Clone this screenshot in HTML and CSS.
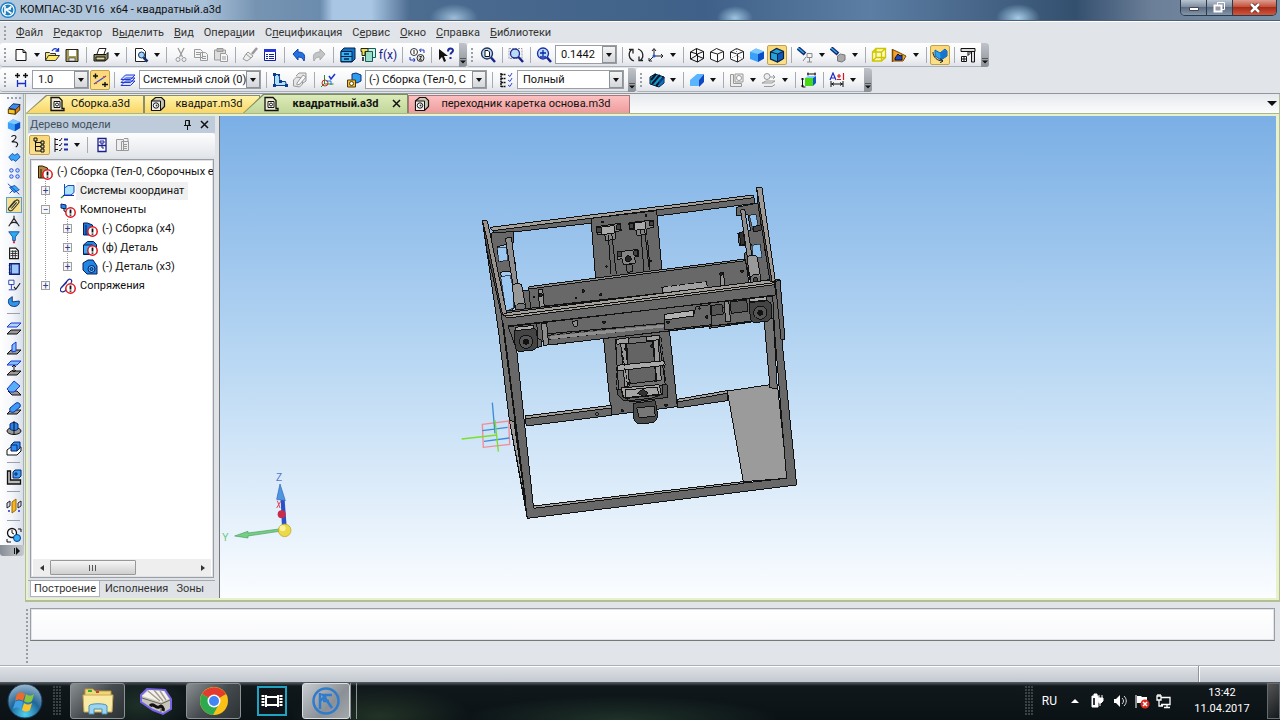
FILE: index.html
```html
<!DOCTYPE html>
<html lang="ru">
  <head>
    <meta charset="UTF-8" />
    <meta name="viewport" content="width=device-width, initial-scale=1.0" />
    <title>КОМПАС-3D V16 x64 - квадратный.a3d</title>
    <link rel="stylesheet" href="styles.css">
  </head>
  <body>
    <!-- icon sprite -->
    <svg class="sprite" aria-hidden="true">
      <defs>
        <symbol id="logo" viewBox="0 0 16 16"><circle cx="8" cy="8" r="8" fill="#1d7fc4"/><circle cx="8" cy="8" r="6" fill="none" stroke="#fff" stroke-width="1.2"/><path d="M5 4v8M11.500 4.500L6.500 8l5 3.500M6 7h5" fill="none" stroke="#fff" stroke-width="1.600"/></symbol>
        <symbol id="new" viewBox="0 0 16 16"><path d="M3 2.500h7l3 3v8H3zM10 2.500v3h3" fill="#fff" stroke="#111"/></symbol>
        <symbol id="open" viewBox="0 0 16 16"><path d="M1.500 13V5.500h4l1 1h5V8" fill="#f5e27a" stroke="#333"/><path d="M1.500 13.500l3-5h11l-4 5z" fill="#ffe76a" stroke="#333"/><path d="M8 4c2-3 4-3 6-1M14.500 1v3h-3" fill="none" stroke="#1632c8" stroke-width="1.300"/></symbol>
        <symbol id="save" viewBox="0 0 16 16"><path d="M2 2.500h12v12H2z" fill="#a99d55" stroke="#222"/><path d="M5 3h7v6H5z" fill="#fff"/><path d="M5 11h6v3H5z" fill="#eee" stroke="#333" stroke-width=".6"/></symbol>
        <symbol id="print" viewBox="0 0 16 16"><path d="M4 7l2-5.500h7L11 7" fill="#fff" stroke="#222"/><path d="M1 7.500h12l2-2v6l-3 2.500H1z" fill="#8d885b" stroke="#111"/><path d="M3 10h9v3H3z" fill="#ded99c" stroke="#111"/></symbol>
        <symbol id="preview" viewBox="0 0 16 16"><path d="M2.500 1.500h7l3 3v10h-10z" fill="#fff" stroke="#222"/><circle cx="8.500" cy="8" r="3" fill="#9fd4f8" stroke="#15306f"/><path d="M10.500 10.500l4 4" stroke="#15306f" stroke-width="2.500"/></symbol>
        <symbol id="cut" viewBox="0 0 16 16"><path d="M5 1l4.500 9M11 1L6.500 10" stroke="#9a9a9a" stroke-width="1.300"/><circle cx="5" cy="12.500" r="2" fill="none" stroke="#9a9a9a"/><circle cx="11" cy="12.500" r="2" fill="none" stroke="#9a9a9a"/></symbol>
        <symbol id="copy" viewBox="0 0 16 16"><path d="M1.500 2.500h6l2 2v6h-8zM7.500 5.500h5l2 2v6h-7zM3 5.500h4M3 7.500h4M9 9.500h4M9 11.500h4" fill="#f4f5f6" stroke="#9a9a9a"/></symbol>
        <symbol id="paste" viewBox="0 0 16 16"><path d="M1.500 3h11v10h-11zM4 1.500h6v3H4z" fill="#ddd" stroke="#999"/><path d="M7.500 6.500h5l2 2v6h-7zM9 10h4M9 12h4" fill="#f7f7f7" stroke="#999"/></symbol>
        <symbol id="brush" viewBox="0 0 16 16"><path d="M15 1l-5 6" stroke="#999" stroke-width="2.500"/><path d="M6 5l5 4-2 2-5-4zM4 7L1 12l4 2 4-3" fill="#eee" stroke="#999"/></symbol>
        <symbol id="props" viewBox="0 0 16 16"><path d="M2.500 2.500h11v11h-11z" fill="#fff" stroke="#13209c"/><path d="M2 2h12v3H2z" fill="#2337d8"/><path d="M4 7.500h2M7 7.500h5M4 9.500h2M7 9.500h5M4 11.500h2M7 11.500h5" stroke="#13209c"/></symbol>
        <symbol id="undo" viewBox="0 0 16 16"><path d="M2 7l5-5v3c5 0 8 2 6 9-1-3-3-4-6-4v3z" fill="#2272e0" stroke="#1044a8"/></symbol>
        <symbol id="redo" viewBox="0 0 16 16"><path d="M14 7L9 2v3C4 5 1 7 3 14c1-3 3-4 6-4v3z" fill="#c2c4c6" stroke="#aaa"/></symbol>
        <symbol id="cabinet" viewBox="0 0 16 16"><path d="M1 4l3-3h11v11l-3 3H1z" fill="#1173c6" stroke="#06224c"/><path d="M1 4.500h11v10H1zM1 9.500h11" fill="#37b5f2" stroke="#06224c"/><path d="M4 7h5M4 12h5" stroke="#002454" stroke-width="1.500"/></symbol>
        <symbol id="library" viewBox="0 0 16 16"><path d="M7.500 1.500h8v9h-8z" fill="#d4f0e6" stroke="#115d57"/><path d="M5.500 4.500h7v10h-7z" fill="#9adcc8" stroke="#115d57"/><path d="M1 1.500h7v3H5v4H2v-4H1z" fill="#ece34a" stroke="#222"/><path d="M3 10v4" stroke="#111" stroke-width="1.500"/></symbol>
        <symbol id="cycle12" viewBox="0 0 16 16"><circle cx="5" cy="5" r="3.500" fill="#fff" stroke="#333"/><circle cx="11.500" cy="11" r="3.500" fill="#ddd" stroke="#333"/><path d="M5 3v4M10.500 9.500h2L10.500 13h2.500" stroke="#222" fill="none"/><path d="M15 6V3h-4M1 10v3h5M12 1.500L10.500 3 12 5M4.500 11L6 13l-1.500 2" fill="none" stroke="#1a32c8"/></symbol>
        <symbol id="whats" viewBox="0 0 16 16"><path d="M1 2v11l3-3 2 5 2-1-2-5h4z" fill="#111"/><path d="M10 4.500c0-4 5-3.500 5-1 0 2-2.500 2-2.500 4M12.500 10v2" fill="none" stroke="#1a2a9c" stroke-width="2"/></symbol>
        <symbol id="zoomfit" viewBox="0 0 16 16"><circle cx="7" cy="6.500" r="5.500" fill="#b9dcf6" stroke="#222b5e" stroke-width="1.300"/><path d="M11 10.500l4 4.500" stroke="#17248c" stroke-width="2.500"/><path d="M5 3.500h3l1.500 1.500v4.500H5z" fill="#fff" stroke="#111"/></symbol>
        <symbol id="zoomwin" viewBox="0 0 16 16"><path d="M1 1.500h13v10H1z" fill="none" stroke="#99a" stroke-dasharray="2 1"/><circle cx="7" cy="6.500" r="4.500" fill="#b9dcf6" stroke="#222b8e" stroke-width="1.300"/><path d="M10.500 10l4.500 5" stroke="#17248c" stroke-width="2.500"/></symbol>
        <symbol id="zoomin" viewBox="0 0 16 16"><circle cx="7" cy="6.500" r="5.500" fill="#b9dcf6" stroke="#1d2caa" stroke-width="1.300"/><path d="M11 10.500l4 4.500" stroke="#17248c" stroke-width="2.500"/><path d="M4 6h6M7 3v6M4 10h6" stroke="#1023a8" stroke-width="1.300"/></symbol>
        <symbol id="rotate" viewBox="0 0 16 16"><path d="M6 14C0 12 0 5 4 2.500M1 2.500h4v4M10 2c6 2 6 9 2 11.500M15 13.500h-4v-4" fill="none" stroke="#222" stroke-width="1.300"/></symbol>
        <symbol id="axes" viewBox="0 0 16 16"><path d="M6 10V2M4 4l2-2.500L8 4M6 9h9M13 7l2 2-2 2M6 9l-5 5M1 11v3h3" fill="none" stroke="#222"/><circle cx="6" cy="9" r="1.500" fill="#25d"/></symbol>
        <symbol id="wire" viewBox="0 0 16 16"><path d="M1.500 5v7l7 3V7zM1.500 5l6-3.500 7 3-6 2.500M14.500 4.500v7L8.500 15M7.500 1.500v7l7 3M7.500 8.500l-6 3.500" fill="none" stroke="#111"/></symbol>
        <symbol id="hidden" viewBox="0 0 16 16"><path d="M1.500 5v7l7 3V7zM1.500 5l6-3.500 7 3-6 2.500M14.500 4.500v7L8.500 15" fill="#fff" stroke="#222"/></symbol>
        <symbol id="thin" viewBox="0 0 16 16"><path d="M1.500 5v7l7 3V7zM1.500 5l6-3.500 7 3-6 2.500M14.500 4.500v7L8.500 15" fill="#fff" stroke="#222"/><path d="M7.500 2v6.500l6 3M7.500 8.500l-6 3" fill="none" stroke="#888" stroke-dasharray="1 1"/></symbol>
        <symbol id="solid" viewBox="0 0 16 16"><path d="M1 5l6-3.500 8 3v7L9 15l-8-3z" fill="#3ba0fa"/><path d="M9 7l6-2.500v7L9 15z" fill="#0b4dc4"/><path d="M1 5l6-3.500 8 3L9 7z" fill="#7cc8ff"/></symbol>
        <symbol id="solidedge" viewBox="0 0 16 16"><path d="M1.500 5l6-3.500 7 3v7L8.500 15l-7-3z" fill="#23a3d8" stroke="#0a1d44" stroke-width="1.200"/><path d="M8.500 7l6-2.500v7L8.500 15z" fill="#0d5ab4" stroke="#0a1d44"/><path d="M1.500 5l7 2" stroke="#0a1d44"/></symbol>
        <symbol id="lamp" viewBox="0 0 16 16"><path d="M1 1l7 6" stroke="#14256c" stroke-width="4"/><path d="M1 1l6 5" stroke="#2fb0f4" stroke-width="1.500"/><path d="M10 6.500h5v4h-5zM12.500 10.500V15M10 15h5M6 14l3-4" fill="none" stroke="#888"/></symbol>
        <symbol id="lampbox" viewBox="0 0 16 16"><path d="M1 1l7 6" stroke="#14256c" stroke-width="4"/><path d="M1 1l6 5" stroke="#2fb0f4" stroke-width="1.500"/><path d="M7.500 9l3-2 4.500 1v5l-3 2-4.500-1z" fill="#aaa" stroke="#777"/></symbol>
        <symbol id="ybox" viewBox="0 0 16 16"><path d="M1.500 5h9v9h-9zM5 1.500h9.500v9H5zM1.500 5L5 1.500M10.500 5l4-3.500M10.500 14l4-3.500M1.500 14L5 10.500" fill="#ffff9a" fill-opacity=".6" stroke="#cfc400" stroke-width="1.300"/></symbol>
        <symbol id="section" viewBox="0 0 16 16"><path d="M1.500 14V2.500L7 5l8 4-3 5z" fill="#f2a32c" stroke="#7a4a05"/><path d="M4 11l3-4 2 2 2-1v5H4z" fill="#1d49c8" stroke="#112"/><path d="M1.500 2v13" stroke="#7a4a05" stroke-width="1.500"/></symbol>
        <symbol id="spin" viewBox="0 0 16 16"><path d="M3 3l5 3 5-4 2 2v5l-6 4-6-4z" fill="#24a5ee" stroke="#1260b8"/><path d="M8 6l5-3 2 1v5l-6 4z" fill="#1673d0"/><path d="M1 5c0 5 4 9 10 9M8 11.500l3 2.500-3 2" fill="none" stroke="#222"/></symbol>
        <symbol id="caliper" viewBox="0 0 16 16"><path d="M1 1.500h14v3H1zM11.500 4.500V15h3V4.500M8 4.500v4l2-2v-2" fill="#ddd" stroke="#111"/><path d="M1.500 9.500h5v5h-5zM4 9.500v5M1.500 12h5" fill="#fff" stroke="#111"/></symbol>
        <symbol id="step" viewBox="0 0 16 16"><path d="M2 3.500h5M4.500 1v5M10 3.500h5M12.500 1v5" stroke="#111" stroke-width="1.400"/><path d="M4.500 8v7M12.500 8v7M5 11.500h7" stroke="#1732c8" stroke-width="1.300"/></symbol>
        <symbol id="snap" viewBox="0 0 16 16"><path d="M1 4h5M3.500 1.500v5M10 12.500h6M13 10v5" stroke="#111" stroke-width="1.400"/><path d="M2 12l12-8" stroke="#334bd8" stroke-width="1.200"/><path d="M3 10h2v2H3zM11 4h2v2h-2z" fill="#c54"/></symbol>
        <symbol id="layers" viewBox="0 0 16 16"><path d="M1 13.500L5.500 9H15l-4.500 4.500zM1 10.500L5.500 6H15l-4.500 4.500zM1 7.500L5.500 3H15l-4.500 4.500z" fill="#cfe4ff" stroke="#2937d4"/></symbol>
        <symbol id="sketch" viewBox="0 0 16 16"><path d="M2.500 2.500v11h12l-1-4H8l-1-7z" fill="#aee0f8" stroke="#0a3b8e"/><path d="M1 1h3v3H1zM1 12h3v3H1zM13 12h3v3h-3zM6 2h2v2H6zM7 8h3v3H7z" fill="#0a3b8e"/></symbol>
        <symbol id="sketchoff" viewBox="0 0 16 16"><path d="M1.500 8l3-3 6 1v6l-3 3-6-1zM4 4l3-3h7v8l-3 2" fill="#e6e6e6" stroke="#999"/><path d="M5 11l6-8 3 2-6 7-3 1z" fill="#f8f8f8" stroke="#999"/></symbol>
        <symbol id="rebuild" viewBox="0 0 16 16"><path d="M4.500 3v9h9M5 11l-4 4" stroke="#1b8f2a" fill="none"/><circle cx="5" cy="11" r="3" fill="none" stroke="#d22"/><path d="M6 9h5v4" fill="none" stroke="#27d"/><path d="M9 4l2 3 4-5" fill="none" stroke="#1732c8" stroke-width="1.500"/></symbol>
        <symbol id="assembly" viewBox="0 0 16 16"><path d="M6 2l4-1 5 2v6l-4 2-5-2z" fill="#2f9cf0" stroke="#0b2e7c"/><path d="M1.500 8h8v7h-8z" fill="#f4c23b" stroke="#553a00"/><circle cx="5.500" cy="11.500" r="2" fill="#fff" stroke="#553a00"/></symbol>
        <symbol id="display" viewBox="0 0 16 16"><path d="M3 1v14M3 2.500h5M3 6.500h5M3 10.500h5M3 14.500h5" stroke="#111" stroke-width="1.500" stroke-dasharray="2 .5"/><path d="M10 3l2 1.500L14 1M10 8l2 1.500L14 6M10 13l2 1.500 2-3.500" fill="none" stroke="#3345d4"/></symbol>
        <symbol id="hatch" viewBox="0 0 16 16"><path d="M1 5l5-3 9 3v6l-5 4-9-3z" fill="#159ac8" stroke="#0a1a35"/><path d="M2 8l5-6M3 12l8-9M7 14l8-9" stroke="#06132c" stroke-width="2"/><path d="M10 8l5-3v6l-5 4z" fill="#0d5ab4" fill-opacity=".6"/></symbol>
        <symbol id="wedge" viewBox="0 0 16 16"><path d="M1 8l7-6h7l-5 6v6H1z" fill="#5ab4ff"/><path d="M10 8l5-6v8l-5 5z" fill="#1049c0"/></symbol>
        <symbol id="ghost" viewBox="0 0 16 16"><path d="M1.500 2.500h3v9h8v3h-11zM6 2h8v8H6z" fill="#eee" stroke="#999"/><circle cx="10" cy="6" r="2.500" fill="#fff" stroke="#999"/></symbol>
        <symbol id="ghostplane" viewBox="0 0 16 16"><path d="M1 11l4-2h9l-3 2zM3 14.500h8l3-2" fill="#eee" stroke="#999"/><circle cx="6" cy="4.500" r="3" fill="#eee" stroke="#999"/><path d="M9 5h5M12 3l2 2-2 2" fill="none" stroke="#999"/></symbol>
        <symbol id="dims" viewBox="0 0 16 16"><path d="M4 6h8v8H4z" fill="#46d816"/><path d="M4 6l3-2h8l-3 2z" fill="#7cd2ff"/><path d="M12 6l3-2v7l-3 3z" fill="#1057d0"/><path d="M1.500 6v9h3M6 2h9M7 .5v3M14 .5v3M0 7h3M0 14h3" fill="none" stroke="#111"/></symbol>
        <symbol id="tolerance" viewBox="0 0 16 16"><path d="M1 8l3-7 3 7M2 6h4" fill="none" stroke="#1a2cc4" stroke-width="1.200"/><path d="M8 4h4M10 2v4M8 7.500h4M14.500 1v7" stroke="#d4181c" stroke-width="1.200"/><path d="M2 9v6M14 9v6M2 12h12M5 10.500L3 12l2 1.500M11 10.500l2 1.500-2 1.500" fill="none" stroke="#111"/></symbol>
        <symbol id="asmtab" viewBox="0 0 16 16"><path d="M2 1.500h8l3 3v8h2v2H2z" fill="#ece9d0" stroke="#111" stroke-width="1.300"/><path d="M5 5.500h6v6H5z" fill="#fff" stroke="#111"/><circle cx="8" cy="8.500" r="1.500" fill="none" stroke="#111"/></symbol>
        <symbol id="parttab" viewBox="0 0 16 16"><path d="M1.500 5l4-3.500h6l3 3v6l-4 4h-9z" fill="#c9c7b0" stroke="#111" stroke-width="1.200"/><path d="M1.500 5h9v9.500h-9z" fill="#eee" stroke="#111"/><circle cx="6" cy="9.500" r="2.700" fill="#fff" stroke="#111"/><circle cx="6.500" cy="9.500" r="1" fill="#333"/></symbol>
        <symbol id="edit" viewBox="0 0 16 16"><path d="M2 7l5-5 8 1-4 6z" fill="#3a8cf0" stroke="#0a1d5c"/><path d="M1.500 8l8 1v5l-8-1z" fill="#f6c81c" stroke="#3c2200"/><path d="M9.500 9l5-5v5l-5 5z" fill="#e08010" stroke="#3c2200"/></symbol>
        <symbol id="curve" viewBox="0 0 16 16"><path d="M5 3c4-3 7 0 4 3S4 9 8 9s6 3 2 6" fill="none" stroke="#111" stroke-width="1.200"/></symbol>
        <symbol id="surface" viewBox="0 0 16 16"><path d="M2 8l4-4 3 2 3-2 3 4-5 5-3-2-2 1z" fill="#3aa2f4" stroke="#0e4cae"/></symbol>
        <symbol id="array" viewBox="0 0 16 16"><g fill="#bfe0ff" stroke="#1b45d4"><circle cx="5" cy="5" r="2"/><circle cx="12" cy="5" r="2"/><circle cx="5" cy="12" r="2"/><circle cx="12" cy="12" r="2"/></g></symbol>
        <symbol id="aux" viewBox="0 0 16 16"><path d="M3 6l6-2 5 5-6 3z" fill="#37a8f2" stroke="#0f49b0"/><path d="M1 2l13 12M3 13l4-4" stroke="#1338a8"/></symbol>
        <symbol id="clip" viewBox="0 0 16 16"><path d="M3 11l7-8c2-2 5 0 3 3l-7 8c-3 2-6-1-3-4l6-7M5 12l6-7" fill="none" stroke="#333" stroke-width="1.200"/></symbol>
        <symbol id="compass" viewBox="0 0 16 16"><path d="M8 2v3M8 5L2 14M8 5l6 9M4 11c2-2 6-2 8 0" fill="none" stroke="#222" stroke-width="1.300"/></symbol>
        <symbol id="filter" viewBox="0 0 16 16"><path d="M2 2h12L9.500 8v4h-3V8z" fill="#2fa8f4" stroke="#0d4ea0"/><circle cx="8" cy="14" r="1.300" fill="#e22"/></symbol>
        <symbol id="sheet" viewBox="0 0 16 16"><path d="M3 2.500h7l3 3v9H3z" fill="#fff" stroke="#111" stroke-width="1.300"/><path d="M4 6h8M4 8.500h8M4 11h8M6.500 5v9M9.500 5v9" stroke="#222"/></symbol>
        <symbol id="report" viewBox="0 0 16 16"><path d="M3 2h11v12H3z" fill="#9fc6f8" stroke="#0a1f7c" stroke-width="1.500"/><path d="M5 2v12M2 4h2M2 8h2M2 12h2" stroke="#0a1f7c"/></symbol>
        <symbol id="check" viewBox="0 0 16 16"><path d="M2 2.500h6v5H2zM5 7.500V13M2 13.500h7" fill="#fff" stroke="#1732a8"/><path d="M8 10l2 3 5-7" fill="none" stroke="#111" stroke-width="1.200"/></symbol>
        <symbol id="sheetmetal" viewBox="0 0 16 16"><path d="M2 6l4-3v6l8-1c1 5-4 7-8 6s-5-4-4-8z" fill="#2b96ea" stroke="#0a2468"/></symbol>
        <symbol id="pl1" viewBox="0 0 16 16"><path d="M1 7l4-4h10l-4 4z" fill="#a9d7ff" stroke="#1c35d0"/><path d="M1 14l4-4h10l-4 4z" fill="#999" stroke="#111"/></symbol>
        <symbol id="pl2" viewBox="0 0 16 16"><path d="M1 14l4-4h10l-4 4z" fill="#999" stroke="#111"/><path d="M6 12V5l4-3v9z" fill="#7cc0ff" stroke="#1c35d0"/></symbol>
        <symbol id="pl3" viewBox="0 0 16 16"><path d="M1 5l4-4h10l-4 4z" fill="#7cc0ff" stroke="#1c35d0"/><path d="M1 15l4-4h10l-4 4z" fill="#999" stroke="#111"/><path d="M8 5v7M6 7l2-2 2 2M6 10l2 2 2-2" fill="none" stroke="#111"/></symbol>
        <symbol id="pl4" viewBox="0 0 16 16"><path d="M2 11h9l4 4H6z" fill="#999" stroke="#111"/><path d="M1 9l7-8 6 5-6 6H4z" fill="#59aef8" stroke="#1c35d0"/></symbol>
        <symbol id="pl5" viewBox="0 0 16 16"><path d="M1 14l4-4h10l-4 4z" fill="#999" stroke="#111"/><path d="M4 8l6-5c3-1 5 1 4 4l-6 5c-3 1-5-1-4-4z" fill="#3c9cf4" stroke="#1230a4"/></symbol>
        <symbol id="pl6" viewBox="0 0 16 16"><ellipse cx="8" cy="11" rx="7" ry="3.500" fill="#999" stroke="#111"/><path d="M4 4v5c2 2 6 2 8 0V4c-2-2-6-2-8 0z" fill="#2b83ea" stroke="#0a2468"/><path d="M8 1v14" stroke="#111"/></symbol>
        <symbol id="pl7" viewBox="0 0 16 16"><path d="M1 10l4-3h10v4l-4 4H1z" fill="#fff" stroke="#111"/><path d="M5 5l3-3h6v6l-3 3H5z" fill="#2f8cf0" stroke="#0a2468"/><path d="M5 5h6v6" fill="none" stroke="#0a2468"/></symbol>
        <symbol id="corner" viewBox="0 0 16 16"><path d="M1.500 2h3v9h10v4h-13z" fill="#bbb" stroke="#111" stroke-width="1.300"/><path d="M7 3l2-2h6v6l-2 2H7z" fill="#3c9cf4" stroke="#0a2468"/><path d="M10 3v4M8 5h4" stroke="#0a2468"/></symbol>
        <symbol id="mirror" viewBox="0 0 16 16"><path d="M6 4l4-3v11l-4 3z" fill="#f4b628" stroke="#a06a00"/><path d="M1 5l3-2v5l-3 2zM12 5l3-2v5l-3 2z" fill="#ddd" stroke="#223"/><circle cx="3" cy="13" r="1" fill="#1c35d0"/><circle cx="13" cy="13" r="1" fill="#1c35d0"/></symbol>
        <symbol id="gears" viewBox="0 0 16 16"><circle cx="6" cy="6" r="4.500" fill="#fff" stroke="#111" stroke-width="1.300"/><path d="M6 3v3l2 1" stroke="#111" fill="none"/><circle cx="11" cy="11" r="3.500" fill="#2fb0f4" stroke="#0a3b8e"/><path d="M12 2h3v3M1 12v3h4" fill="none" stroke="#111"/></symbol>
        <symbol id="tree" viewBox="0 0 16 16"><path d="M3.500 1v13h6M3.500 5.500h6M3.500 9.500h6" fill="none" stroke="#111"/><path d="M2 1h3v3H2zM9 4h3v3H9zM9 8h3v3H9zM9 12h3v3H9z" fill="#e8dc90" stroke="#111"/></symbol>
        <symbol id="list" viewBox="0 0 16 16"><path d="M2 1v14M2 2.500h3M2 7.500h3M2 12.500h3" stroke="#111"/><path d="M6 3l1 1 2-3M6 8l1 1 2-3M6 13l1 1 2-3" fill="none" stroke="#223"/><path d="M11 2.500h4M11 7.500h4M11 12.500h4" stroke="#1a2caa" stroke-width="2"/></symbol>
        <symbol id="panel" viewBox="0 0 16 16"><path d="M4 1.500h8v13H4zM4 8.500h8" fill="#fff" stroke="#1a1f8c" stroke-width="1.300"/><path d="M6 4h4v2H6zM8 6v5h2" fill="none" stroke="#1a1f8c"/></symbol>
        <symbol id="reloff" viewBox="0 0 16 16"><path d="M1.500 2.500h7v11h-7zM6.500 4.500h7v9h-7zM8 7.500h4M8 9.500h4M8 11.500h4M9 1.500h4v3" fill="#eee" stroke="#999"/></symbol>
        <symbol id="bang" viewBox="0 0 16 16"><circle cx="10.500" cy="10.500" r="4.700" fill="#fff" stroke="#e0141c" stroke-width="1.500"/><path d="M10.500 7.500v4M10.500 12.500v1.300" stroke="#111" stroke-width="1.800"/></symbol>
        <symbol id="t-root" viewBox="0 0 16 16"><path d="M1.500 2h4l5 2v4h3v6h-12z" fill="#b38a4a" stroke="#2c1c00"/><path d="M4 5v9" stroke="#2c1c00"/><use href="#bang"/></symbol>
        <symbol id="t-cs" viewBox="0 0 16 16"><path d="M4.500 5L8 2.500h6v7L11 12H4.500z" fill="#a8e4fa" stroke="#1a49c0"/><path d="M4.500 1v11" stroke="#1a49c0"/><path d="M4.500 12L1 15" stroke="#1b9a28" stroke-width="1.300"/><path d="M3 12.500h11" stroke="#1a2cc8"/></symbol>
        <symbol id="t-comp" viewBox="0 0 16 16"><path d="M1 2l5 1v4l-5-1z" fill="#2a8cf0" stroke="#0a2468"/><path d="M4 6v3l3 1" stroke="#111" fill="none"/><use href="#bang"/></symbol>
        <symbol id="t-asm" viewBox="0 0 16 16"><path d="M1.500 2h4l5 2v4h3v6h-12z" fill="#1a78d8" stroke="#081c5c"/><path d="M4 4v10" stroke="#081c5c"/><use href="#bang"/></symbol>
        <symbol id="t-part" viewBox="0 0 16 16"><path d="M1.500 5l4-3.500h6l3 3v6l-4 4h-9z" fill="#1e86e4" stroke="#081c5c"/><path d="M1.500 5h9v9h-9z" fill="#3faaf4" stroke="#081c5c"/></symbol>
        <symbol id="t-partbad" viewBox="0 0 16 16"><use href="#t-part"/><use href="#bang"/></symbol>
        <symbol id="t-partok" viewBox="0 0 16 16"><path d="M1 4l5-3h5l4 6v8H5L1 11z" fill="#1e86e4" stroke="#081c5c"/><circle cx="9.500" cy="10" r="3.500" fill="#5cc0ff" stroke="#081c5c"/><circle cx="9.500" cy="10" r="1.500" fill="#1e86e4" stroke="#081c5c"/></symbol>
        <symbol id="t-mate" viewBox="0 0 16 16"><path d="M1 10l7-8c2-2 5 0 3 3l-6 8c-3 2-6 0-4-3l6-6" fill="none" stroke="#1b2a9c" stroke-width="1.200"/><use href="#bang"/></symbol>
      </defs>
    </svg>

    <header class="titlebar">
      <svg class="titlebar__logo"><use href="#logo"/></svg>
      <h1 class="titlebar__text">КОМПАС-3D V16 &nbsp;x64 - квадратный.a3d</h1>
      <div class="titlebar__btns">
        <button class="winbtn" aria-label="Свернуть"><svg width="12" height="8"><path d="M1.500 3.500h9v3h-9z" fill="#fff" stroke="#445"/></svg></button>
        <button class="winbtn" aria-label="Восстановить"><svg width="13" height="11"><path d="M4.500 .5h7v7h-7z" fill="none" stroke="#fff"/><path d="M1.500 3.500h7v6h-7z" fill="#99a" stroke="#fff" stroke-width="2"/></svg></button>
        <button class="winbtn winbtn--close" aria-label="Закрыть"><svg width="12" height="10"><path d="M2 1l8 8M10 1L2 9" stroke="#5c2020" stroke-width="4"/><path d="M2 1l8 8M10 1L2 9" stroke="#fff" stroke-width="2.500"/></svg></button>
      </div>
    </header>

    <nav class="menu">
      <span class="grip"></span>
      <button class="menu__item"><u>Ф</u>айл</button>
      <button class="menu__item"><u>Р</u>едактор</button>
      <button class="menu__item">В<u>ы</u>делить</button>
      <button class="menu__item"><u>В</u>ид</button>
      <button class="menu__item">Опера<u>ц</u>ии</button>
      <button class="menu__item">С<u>п</u>ецификация</button>
      <button class="menu__item">С<u>е</u>рвис</button>
      <button class="menu__item"><u>О</u>кно</button>
      <button class="menu__item"><u>С</u>правка</button>
      <button class="menu__item"><u>Б</u>иблиотеки</button>
    </nav>

    <div class="toolbars">
      <div class="toolbar">
        <span class="grip"></span>
        <button class="tool" aria-label="Создать"><svg class="icon"><use href="#new"/></svg></button>
        <button class="drop" aria-label="Варианты создания"></button>
        <button class="tool" aria-label="Открыть"><svg class="icon"><use href="#open"/></svg></button>
        <button class="tool" aria-label="Сохранить"><svg class="icon"><use href="#save"/></svg></button>
        <span class="sep"></span>
        <button class="tool" aria-label="Печать"><svg class="icon"><use href="#print"/></svg></button>
        <button class="drop" aria-label="Варианты печати"></button>
        <span class="sep"></span>
        <button class="tool" aria-label="Просмотр"><svg class="icon"><use href="#preview"/></svg></button>
        <button class="drop" aria-label="Варианты просмотра"></button>
        <span class="sep"></span>
        <button class="tool" aria-label="Вырезать"><svg class="icon"><use href="#cut"/></svg></button>
        <button class="tool" aria-label="Копировать"><svg class="icon"><use href="#copy"/></svg></button>
        <button class="tool" aria-label="Вставить"><svg class="icon"><use href="#paste"/></svg></button>
        <span class="sep"></span>
        <button class="tool" aria-label="Копировать свойства"><svg class="icon"><use href="#brush"/></svg></button>
        <button class="tool" aria-label="Свойства"><svg class="icon"><use href="#props"/></svg></button>
        <span class="sep"></span>
        <button class="tool" aria-label="Отменить"><svg class="icon"><use href="#undo"/></svg></button>
        <button class="tool" aria-label="Повторить"><svg class="icon"><use href="#redo"/></svg></button>
        <span class="sep"></span>
        <button class="tool" aria-label="Менеджер библиотек"><svg class="icon"><use href="#cabinet"/></svg></button>
        <button class="tool" aria-label="Менеджер документа"><svg class="icon"><use href="#library"/></svg></button>
        <button class="tool tool--fx">f(x)</button>
        <span class="sep"></span>
        <button class="tool" aria-label="Перенумеровать"><svg class="icon"><use href="#cycle12"/></svg></button>
        <span class="sep"></span>
        <button class="tool" aria-label="Что это такое?"><svg class="icon"><use href="#whats"/></svg></button>
        <button class="cap" aria-label="Параметры панели"></button>
      </div>
      <div class="toolbar toolbar--view">
        <span class="grip"></span>
        <button class="tool" aria-label="Показать все"><svg class="icon"><use href="#zoomfit"/></svg></button>
        <span class="sep"></span>
        <button class="tool" aria-label="Увеличить рамкой"><svg class="icon"><use href="#zoomwin"/></svg></button>
        <span class="sep"></span>
        <button class="tool" aria-label="Масштаб"><svg class="icon"><use href="#zoomin"/></svg></button>
        <label class="combo combo--zoom"><select aria-label="Текущий масштаб"><option>0.1442</option></select><span class="combo__btn"></span></label>
        <span class="sep"></span>
        <button class="tool" aria-label="Повернуть"><svg class="icon"><use href="#rotate"/></svg></button>
        <button class="tool" aria-label="Ориентация"><svg class="icon"><use href="#axes"/></svg></button>
        <button class="drop" aria-label="Список ориентаций"></button>
        <span class="sep"></span>
        <button class="tool" aria-label="Каркас"><svg class="icon"><use href="#wire"/></svg></button>
        <button class="tool" aria-label="Без невидимых линий"><svg class="icon"><use href="#hidden"/></svg></button>
        <button class="tool" aria-label="Невидимые линии тонкие"><svg class="icon"><use href="#thin"/></svg></button>
        <button class="tool" aria-label="Полутоновое"><svg class="icon"><use href="#solid"/></svg></button>
        <button class="tool tool--on" aria-label="Полутоновое с каркасом"><svg class="icon"><use href="#solidedge"/></svg></button>
        <span class="sep"></span>
        <button class="tool" aria-label="Скрыть объекты"><svg class="icon"><use href="#lamp"/></svg></button>
        <button class="drop" aria-label="Список скрытых"></button>
        <button class="tool" aria-label="Скрыть компоненты"><svg class="icon"><use href="#lampbox"/></svg></button>
        <button class="drop" aria-label="Список компонентов"></button>
        <span class="sep"></span>
        <button class="tool" aria-label="Габарит"><svg class="icon"><use href="#ybox"/></svg></button>
        <button class="tool" aria-label="Сечение"><svg class="icon"><use href="#section"/></svg></button>
        <button class="drop" aria-label="Список сечений"></button>
        <span class="sep"></span>
        <button class="tool tool--on" aria-label="Вращение"><svg class="icon"><use href="#spin"/></svg></button>
        <span class="sep"></span>
        <button class="tool" aria-label="Измерить"><svg class="icon"><use href="#caliper"/></svg></button>
        <button class="cap" aria-label="Параметры панели"></button>
      </div>
    </div>

    <div class="toolbars">
      <div class="toolbar toolbar--state">
        <span class="grip"></span>
        <button class="tool" aria-label="Шаг курсора"><svg class="icon"><use href="#step"/></svg></button>
        <label class="combo combo--step"><select aria-label="Текущий шаг"><option>1.0</option></select><span class="combo__btn"></span></label>
        <button class="tool tool--on" aria-label="Привязки"><svg class="icon"><use href="#snap"/></svg></button>
        <span class="sep"></span>
        <button class="tool" aria-label="Слои"><svg class="icon"><use href="#layers"/></svg></button>
        <label class="combo combo--wide"><select aria-label="Текущий слой"><option>Системный слой (0)</option></select><span class="combo__btn"></span></label>
        <span class="sep"></span>
        <button class="tool" aria-label="Эскиз"><svg class="icon"><use href="#sketch"/></svg></button>
        <button class="tool" aria-label="Редактировать эскиз"><svg class="icon"><use href="#sketchoff"/></svg></button>
        <span class="sep"></span>
        <button class="tool" aria-label="Перестроить"><svg class="icon"><use href="#rebuild"/></svg></button>
        <span class="sep sep--blank"></span>
        <button class="tool" aria-label="Исполнение"><svg class="icon"><use href="#assembly"/></svg></button>
        <label class="combo combo--wide"><select aria-label="Текущее исполнение"><option>(-) Сборка (Тел-0, С</option></select><span class="combo__btn"></span></label>
        <span class="sep"></span>
        <button class="tool" aria-label="Тип загрузки"><svg class="icon"><use href="#display"/></svg></button>
        <label class="combo combo--load"><select aria-label="Загрузка"><option>Полный</option></select><span class="combo__btn"></span></label>
        <button class="cap" aria-label="Параметры панели"></button>
      </div>
      <div class="toolbar toolbar--model">
        <span class="grip"></span>
        <button class="tool" aria-label="Штриховка"><svg class="icon"><use href="#hatch"/></svg></button>
        <button class="drop" aria-label="Ещё"></button>
        <span class="sep"></span>
        <button class="tool" aria-label="Скос"><svg class="icon"><use href="#wedge"/></svg></button>
        <button class="drop" aria-label="Ещё"></button>
        <span class="sep"></span>
        <button class="tool" aria-label="Компонент"><svg class="icon"><use href="#ghost"/></svg></button>
        <button class="drop" aria-label="Ещё"></button>
        <button class="tool" aria-label="Плоскость"><svg class="icon"><use href="#ghostplane"/></svg></button>
        <button class="drop" aria-label="Ещё"></button>
        <span class="sep"></span>
        <button class="tool" aria-label="Размеры"><svg class="icon"><use href="#dims"/></svg></button>
        <span class="sep"></span>
        <button class="tool" aria-label="Допуски"><svg class="icon"><use href="#tolerance"/></svg></button>
        <button class="drop" aria-label="Ещё"></button>
        <button class="cap" aria-label="Параметры панели"></button>
      </div>
    </div>

    <main class="work">
      <aside class="sidebar">
        <div class="sidebar__tools">
          <span class="grip grip--row"></span>
          <button class="side" aria-label="Редактирование"><svg class="icon"><use href="#edit"/></svg></button>
          <button class="side" aria-label="Элементы"><svg class="icon"><use href="#solid"/></svg></button>
          <button class="side" aria-label="Кривые"><svg class="icon"><use href="#curve"/></svg></button>
          <button class="side" aria-label="Поверхности"><svg class="icon"><use href="#surface"/></svg></button>
          <button class="side" aria-label="Массивы"><svg class="icon"><use href="#array"/></svg></button>
          <button class="side" aria-label="Геометрия"><svg class="icon"><use href="#aux"/></svg></button>
          <button class="side side--on" aria-label="Сопряжения"><svg class="icon"><use href="#clip"/></svg></button>
          <button class="side" aria-label="Измерения"><svg class="icon"><use href="#compass"/></svg></button>
          <button class="side" aria-label="Фильтры"><svg class="icon"><use href="#filter"/></svg></button>
          <button class="side" aria-label="Спецификация"><svg class="icon"><use href="#sheet"/></svg></button>
          <button class="side" aria-label="Отчёты"><svg class="icon"><use href="#report"/></svg></button>
          <button class="side" aria-label="Обозначения"><svg class="icon"><use href="#check"/></svg></button>
          <button class="side" aria-label="Листовое тело"><svg class="icon"><use href="#sheetmetal"/></svg></button>
          <span class="hsep"></span>
          <button class="side side--tall" aria-label="Параллельность"><svg class="icon"><use href="#pl1"/></svg></button>
          <button class="side side--tall" aria-label="Перпендикулярность"><svg class="icon"><use href="#pl2"/></svg></button>
          <button class="side side--tall" aria-label="На расстоянии"><svg class="icon"><use href="#pl3"/></svg></button>
          <button class="side side--tall" aria-label="Под углом"><svg class="icon"><use href="#pl4"/></svg></button>
          <button class="side side--tall" aria-label="Касание"><svg class="icon"><use href="#pl5"/></svg></button>
          <button class="side side--tall" aria-label="Соосность"><svg class="icon"><use href="#pl6"/></svg></button>
          <button class="side side--tall" aria-label="Совпадение"><svg class="icon"><use href="#pl7"/></svg></button>
          <span class="hsep"></span>
          <button class="side side--tall" aria-label="Зависимое положение"><svg class="icon"><use href="#corner"/></svg></button>
          <span class="hsep"></span>
          <button class="side side--tall" aria-label="Симметрия"><svg class="icon"><use href="#mirror"/></svg></button>
          <span class="hsep"></span>
          <button class="side side--tall" aria-label="Вращение - вращение"><svg class="icon"><use href="#gears"/></svg></button>
        </div>
        <button class="sidebar__cap" aria-label="Параметры панели"><svg width="8" height="8"><path d="M1.500 1v6" stroke="#111"/><path d="M3 0l4 4-4 4z" fill="#111"/></svg></button>
      </aside>

      <section class="doc">
        <div class="tabs">
          <button class="tab tab--slant"><svg class="icon"><use href="#asmtab"/></svg><span>Сборка.a3d</span></button>
          <button class="tab tab--part"><svg class="icon"><use href="#parttab"/></svg><span>квадрат.m3d</span></button>
          <button class="tab tab--slant tab--active"><svg class="icon"><use href="#asmtab"/></svg><span>квадратный.a3d</span><svg class="tab__close"><path d="M1 1l7 7M8 1L1 8" stroke="#111" stroke-width="1.500"/></svg></button>
          <button class="tab tab--pink"><svg class="icon"><use href="#parttab"/></svg><span>переходник каретка основа.m3d</span></button>
          <button class="tabs__more" aria-label="Список документов"></button>
        </div>

        <div class="doc__body">
          <section class="panel">
            <header class="panel__head">
              <h2>Дерево модели</h2>
              <button aria-label="Закрепить"><svg width="9" height="10"><path d="M2.500 .5h4v5h-4zM6 0v6M1 5.500h7M4.500 6v4" fill="none" stroke="#111"/></svg></button>
              <button aria-label="Закрыть панель"><svg width="9" height="9"><path d="M1 1l7 7M8 1L1 8" stroke="#111" stroke-width="1.500"/></svg></button>
            </header>
            <div class="panel__tools">
              <button class="tool tool--on" aria-label="Структура дерева"><svg class="icon"><use href="#tree"/></svg></button>
              <button class="tool" aria-label="Состав дерева"><svg class="icon"><use href="#list"/></svg></button>
              <button class="drop" aria-label="Выбор состава"></button>
              <span class="sep"></span>
              <button class="tool" aria-label="Дополнительное окно"><svg class="icon"><use href="#panel"/></svg></button>
              <button class="tool" aria-label="Отношения"><svg class="icon"><use href="#reloff"/></svg></button>
            </div>
            <div class="tree">
              <ul class="tree__list">
                <li class="node node--root"><svg class="icon"><use href="#t-root"/></svg><span>(-) Сборка (Тел-0, Сборочных е</span></li>
                <li class="node"><i class="exp">+</i><svg class="icon"><use href="#t-cs"/></svg><span class="node__sel">Системы координат</span></li>
                <li class="node"><i class="exp">−</i><svg class="icon"><use href="#t-comp"/></svg><span>Компоненты</span></li>
                <li class="node node--sub"><i class="exp">+</i><svg class="icon"><use href="#t-asm"/></svg><span>(-) Сборка (x4)</span></li>
                <li class="node node--sub"><i class="exp">+</i><svg class="icon"><use href="#t-partbad"/></svg><span>(ф) Деталь</span></li>
                <li class="node node--sub"><i class="exp">+</i><svg class="icon"><use href="#t-partok"/></svg><span>(-) Деталь (x3)</span></li>
                <li class="node"><i class="exp">+</i><svg class="icon"><use href="#t-mate"/></svg><span>Сопряжения</span></li>
              </ul>
              <div class="scroll">
                <button class="scroll__arrow scroll__arrow--left" aria-label="Влево"></button>
                <div class="scroll__track"><div class="scroll__thumb"></div></div>
                <button class="scroll__arrow" aria-label="Вправо"></button>
              </div>
            </div>
            <div class="panel__tabs">
              <button class="ptab ptab--on">Построение</button>
              <button class="ptab">Исполнения</button>
              <button class="ptab">Зоны</button>
            </div>
          </section>

          <div class="view">
            <svg class="view__scene" role="img" aria-label="Модель рамы">
              <g transform="translate(250 64) scale(.3333)" fill="#686868" stroke="#111" stroke-width="3" shape-rendering="crispEdges">
                <!-- rear beam and centre plate -->
                <path d="M60 142L850 45l5 25L600 103 75 162z"/>
                <path d="M60 142L850 45l1 8L68 152z" fill="#a4a09c"/>
                <path d="M363 115l197-23 22 250-200 20z"/>
                <path d="M378 140l72-10 4 22-18 3v22l-28 5-4-20-20 3zM476 128l74-8 2 22-22 4v18l-30 2-3-18-18 2zM442 216l62-8 2 20-12 2 2 20-36 4-4-18-14 2z" fill="#858585"/>
                <path d="M380 142h14v16h-14zM440 134h12v16h-12zM478 130h14v16h-14zM538 124h12v14h-12zM444 216h12v14h-12zM492 212h12v14h-12z" fill="#444"/>
                <path d="M395 140l38-3v22l-38 5zM494 128l32-3v22l-32 4z" fill="#aaa"/>
                <circle cx="475" cy="236" r="9" fill="#222"/>
                <path d="M415 165l8 118M425 160l14 122M512 150l10 122M524 150l14 120M533 180l7 90" fill="none"/>
                <path d="M468 255l4 22 16-2-2-22z"/>
                <g fill="#222"><circle cx="397" cy="126" r="3"/><circle cx="528" cy="106" r="3"/><circle cx="410" cy="260" r="3"/><circle cx="541" cy="243" r="3"/></g>
                <!-- left side assembly -->
                <path d="M66 158l64-3v35l-24 4-24 6 4 44 48-8 4 35-48 6 40 110-40 25L55 235z"/>
                <path d="M82 204l26-3 6 40-28 4zM92 290l28-4 10 40 2 56-24 12z" fill="#9cc8f2" stroke-width="2"/>
                <path d="M106 175l18-3 22 160-14 3z" fill="#8f8f8f"/>
                <path d="M127 318c5-8 24-10 28-3l13 65c-4 10-28 14-34 5z" fill="#989898"/>
                <path d="M136 378c8-12 30-10 34 4l5 16-38 4z" fill="#777"/>
                <path d="M158 332l20-2 30 70-36 6z"/>
                <!-- right side assembly -->
                <path d="M800 82l70-14 20 85-8 45 20 100-60 10-20-85 22-30-36 5-4-38 38-8-8-48-34 4z"/>
                <path d="M838 106l20-3 8 46-16 4zM846 196l24-4 6 40-26 5z" fill="#92c2f0" stroke-width="2"/>
                <path d="M812 90l12-3 22 140-14 3z" fill="#8f8f8f"/>
                <path d="M808 158l12-3 5 38-12 3z" fill="#333"/>
                <path d="M850 140l26-6 6 14-30 8z" fill="#444"/>
                <path d="M831 234c6-10 26-10 30-4l10 56c-5 8-28 10-32 2z" fill="#999"/>
                <circle cx="857" cy="298" r="16" fill="#777"/><circle cx="857" cy="298" r="7" fill="#444"/>
                <!-- carriage rail -->
                <path d="M176 320l650-83 12 80-655 83z"/>
                <path d="M176 320l650-83v5l-649 85z" fill="#8c8c8c"/>
                <path d="M225 378l500-55M225 386l600-68M225 394l560-62" fill="none"/>
                <path d="M225 392l360-42" fill="none" stroke-dasharray="18 9"/>
                <path d="M576 322l134-17 3 26-136 18z" fill="#a0a0a0" stroke-dasharray="18 8"/>
                <path d="M204 330l14-2 6 64-14 3zM750 278l10-2 6 48-13 3z" fill="#939393"/>
                <g fill="#222"><circle cx="340" cy="333" r="4"/><circle cx="392" cy="344" r="4"/><circle cx="318" cy="354" r="3"/><circle cx="816" cy="274" r="4"/><circle cx="192" cy="351" r="3"/><circle cx="212" cy="345" r="5"/><circle cx="754" cy="281" r="5"/></g>
                <!-- lower centre plate -->
                <path d="M400 470l198-22 24 232-198 25z"/>
                <path d="M436 478l130-12 20 150-140 14z" fill="#747474"/>
                <path d="M470 492l78-8 10 118-80 10z" fill="#646464"/>
                <path d="M452 490l14-2 13 130-14 2zM550 480l14-2 10 122-14 2z" fill="#999"/>
                <path d="M441 556l142-14 3 14-142 16z" fill="#aaa"/>
                <path d="M454 624l114-10 6 30-112 12z" fill="#a4a4a4"/>
                <path d="M442 630l12-2 4 22 20 12 70-8 30-12-1-28 14-2 2 40-100 14-34-6-15-16z" fill="#555"/>
                <path d="M466 630l96-9 4 22-98 10z" fill="#a4a4a4"/>
                <path d="M502 640l16-12 16 10-12 12z" fill="#333"/>
                <path d="M490 670l66-8 8 50-14 16-46 4-12-14z" fill="#4b4b4b"/>
                <path d="M500 684l52-6 4 30-48 6z" fill="#777"/>
                <path d="M440 500v130M455 505l18 112M573 472l14 130" fill="none" stroke-dasharray="14 6"/>
                <g fill="#222"><circle cx="457" cy="692" r="4"/><circle cx="588" cy="676" r="4"/><circle cx="468" cy="508" r="4"/><circle cx="546" cy="498" r="4"/><circle cx="478" cy="610" r="4"/><circle cx="557" cy="602" r="4"/></g>
                <!-- lower rail -->
                <path d="M112 432l95-10 8 78-75 12zM700 370l212-25 6 70-200 30z"/>
                <path d="M200 425l640-70 8 68-610 72-35-20z"/>
                <path d="M225 462l360-32v-26l240-30M235 478l350-38M235 495l605-70" fill="none"/>
                <path d="M235 466l350-38" stroke-dasharray="18 9" fill="none"/>
                <path d="M240 468l344-34v8l-344 36z" fill="#8f8f8f" stroke="none"/>
                <path d="M583 403l88-12v18l-88 12z" fill="#b2b2b2"/>
                <path d="M583 420l88-12 6-28 44-6 4 60-140 16z"/>
                <path d="M440 478l36-5v16l-36 4zM530 470l40-5v14l-40 4z" fill="#a0a0a0"/>
                <path d="M214 432l16-2 6 64-15 3zM306 424l18-2v14l-10 6zM764 364l12-2 6 62-16 2z" fill="#8d8d8d"/>
                <path d="M780 366l50-6 4 34-50 6zM726 376l30-3 4 30-34 3z" fill="#555"/>
                <g fill="#222"><circle cx="402" cy="427" r="4"/><circle cx="594" cy="427" r="4"/><circle cx="710" cy="411" r="4"/><circle cx="688" cy="386" r="3"/></g>
                <!-- lower rear beam -->
                <path d="M165 708l260-32v30l-256 32zM622 658l150-26v30l-150 22z"/>
                <path d="M165 708l260-32v8l-258 32zM622 658l150-26v8l-150 26z" fill="#a4a09c"/>
                <circle cx="381" cy="702" r="5"/>
                <!-- side cover -->
                <path d="M772 633l150-22 30 284-132 10z" fill="#9b9b9b"/>
                <path d="M882 415l18 208 22 4-12-212z" fill="#747474"/>
                <!-- front frame -->
                <path d="M37 122l15 0 50 275 70 618L118 720 85 450z" fill="#727272"/>
                <path d="M118 720l14 5 40 280z" fill="#9b9b9b"/>
                <path d="M93 395l820-95 15-2 14 180-6 4 44 433-808 100zM114 438l26 72 50 468 760-83-35-425-7-122z" fill-rule="evenodd"/>
                <path d="M190 978l630-73 2 5-630 75z" fill="#a4a09c"/>
                <path d="M93 400l820-102 2 16-802 100z" fill="#a4a09c"/>
                <path d="M104 408l810-100" fill="none"/>
                <path d="M100 430l68 540M913 300l4 45-800 95" fill="none"/>
                <path d="M916 305l14-5 15 178h-12z"/>
                <!-- uprights -->
                <path d="M37 122h15l58 278-16 4z" fill="#99938f"/>
                <path d="M37 122l14 90 43 192 3-2-45-220z" fill="#555"/>
                <path d="M860 22h16l40 280-10 2z" fill="#a09a96"/>
                <path d="M860 22l4 50 36 232 6 0z" fill="#555"/>
                <!-- motors -->
                <path d="M132 452l58-8 10 8 3 48-12 10-45 5-10-10z" fill="#444"/>
                <path d="M136 442l56-6v10l-56 6z" fill="#aaa"/>
                <circle cx="168" cy="485" r="20" fill="#555"/><circle cx="168" cy="485" r="8" fill="#111"/>
                <path d="M838 368l56-6 9 8 2 44-12 10-42 4-10-10z" fill="#444"/>
                <path d="M840 356l50-6v10l-50 6z" fill="#aaa"/>
                <circle cx="871" cy="398" r="20" fill="#555"/><circle cx="871" cy="398" r="8" fill="#111"/>
              </g>
              <!-- origin marker -->
              <g transform="translate(250 214) scale(.3333)" fill="none" stroke-width="4">
                <path d="M37 283l79-10 3 70-79 9z" stroke="#f08c98"/>
                <path d="M37 302l76-10M42 334l76-10M67 218l8 92" stroke="#3c8cdc"/>
                <path d="M-25 327l106-12M75 270l10 95" stroke="#7be02c"/>
              </g>
              <!-- view axes -->
              <g transform="translate(0 344) scale(.3333)">
                <path d="M182 120l4 80h14l-6-80z" fill="#2c50c8"/>
                <path d="M180 72l-10 46 26 4z" fill="#4f96e0" stroke="#2c62b8" stroke-width="2"/>
                <path d="M172 122l8 22M182 124l-12 20" stroke="#e04050" stroke-width="3"/>
                <circle cx="185" cy="163" r="12" fill="#c82c48"/>
                <path d="M44 228l40-14v5l94-12v7l-94 14v6z" fill="#74d084" stroke="#4a9c5c" stroke-width="2"/>
                <circle cx="194" cy="211" r="19" fill="#ecd848" stroke="#b8a020" stroke-width="2"/>
                <circle cx="188" cy="205" r="9" fill="#fbf3a0"/>
                <text x="168" y="62" class="axis axis--z">Z</text>
                <text x="6" y="242" class="axis axis--y">Y</text>
              </g>
            </svg>
          </div>
        </div>
      </section>
    </main>

    <section class="message">
      <span class="message__grip"></span>
      <div class="message__box"></div>
    </section>
    <footer class="status"><span class="status__main"></span><span class="status__cell"></span></footer>

    <div class="taskbar">
      <button class="start" aria-label="Пуск">
        <svg width="36" height="36" viewBox="0 0 36 36"><defs><radialGradient id="orb" cx=".5" cy=".9" r=".9"><stop offset="0" stop-color="#4fd0f4"/><stop offset=".5" stop-color="#1f6699"/><stop offset="1" stop-color="#9fb8cc"/></radialGradient></defs><circle cx="18" cy="18" r="17" fill="url(#orb)" stroke="#1a3c58"/><path d="M10 11c3-2 5-2 8 0l-2 7c-3-2-5-2-8 0z" fill="#ee6a2c"/><path d="M19 11c3 2 5 2 8 0l-2 7c-3 2-5 2-8 0z" fill="#8ac43c"/><path d="M8 19c3-2 5-2 8 0l-2 7c-3-2-5-2-8 0z" fill="#3fa0e4"/><path d="M17 20c3 2 5 2 8 0l-2 7c-3 2-5 2-8 0z" fill="#fbc42c"/></svg>
      </button>
      <span class="taskbar__grip"></span>
      <button class="task task--run" aria-label="Проводник">
        <svg width="32" height="30" viewBox="0 0 32 30"><path d="M3 3h8l2 2h16v20H3z" fill="#f0d878" stroke="#b8963c"/><path d="M1 9h30l-1 17H2z" fill="#f8eaa4" stroke="#c8a850"/><path d="M6 5h4" stroke="#3a3" stroke-width="2"/><path d="M14 6h3" stroke="#d33" stroke-width="2"/><path d="M7 28v-8c0-3 18-3 18 0v8h-5v-5h-8v5z" fill="#9cd4f0" stroke="#4a90b8"/></svg>
      </button>
      <button class="task" aria-label="Утилита">
        <svg width="34" height="30" viewBox="0 0 34 30"><path d="M2 9L8 3l18 1 6 9v10l-8 5-10-4-12-8z" fill="#c8c4bc" stroke="#7464e8" stroke-width="2"/><path d="M3 10l7-6 15 1 5 8-8 3z" fill="#f4f2ea"/><path d="M9 5l12 10M15 4l9 11M21 5l6 9" stroke="#a49c90" stroke-width="1.500"/><path d="M3 12l19 6 9-4M22 18v8" fill="none" stroke="#665"/><path d="M11 20c3-4 6 3 9 1s5 1 4 4" fill="none" stroke="#111" stroke-width="3"/></svg>
      </button>
      <button class="task task--run" aria-label="Chrome">
        <svg width="28" height="28" viewBox="0 0 28 28"><circle cx="14" cy="14" r="14" fill="#fbc116"/><path d="M14 14L2 7a14 14 0 0 1 24 0z" fill="#e33b2e"/><path d="M14 14L2 7a14 14 0 0 0 11 21l6-11z" fill="#2da94f"/><path d="M14 7h12L14 8z" fill="#e33b2e"/><circle cx="14" cy="14" r="6.500" fill="#fff"/><circle cx="14" cy="14" r="5" fill="#4285f4"/></svg>
      </button>
      <button class="task" aria-label="Видеоредактор">
        <svg width="30" height="30" viewBox="0 0 30 30"><path d="M1 1h28v28H1z" fill="#101418" stroke="#1ca4c0" stroke-width="2"/><path d="M6 9v12M24 9v12" stroke="#fff" stroke-width="3" stroke-dasharray="2 1"/><path d="M9 9v12M21 9v12M9 11h12M9 19h12" stroke="#fff" stroke-width="2"/></svg>
      </button>
      <button class="task task--active" aria-label="КОМПАС-3D">
        <svg width="28" height="28" viewBox="0 0 28 28"><circle cx="14" cy="14" r="12.500" fill="none" stroke="#2f7ccc" stroke-width="2.500"/><path d="M8 6v16M20 8h-9l9 13M8 14l6-5M11 14h6" fill="none" stroke="#2f7ccc" stroke-width="2.500"/></svg>
      </button>
      <span class="taskbar__stack"></span>
      <div class="tray">
        <span class="taskbar__grip"></span>
        <button class="tray__lang">RU</button>
        <button class="tray__up" aria-label="Скрытые значки"></button>
        <svg class="icon"><path d="M2 3h6v11H2zM4 3V1h3v2" fill="#fff" stroke="#fff"/><path d="M4 5v7" stroke="#334" stroke-width="2"/><path d="M8 5h5v3l-2 2H9zM9 2v3M12 2v3M10 10v3" fill="#fff" stroke="#fff"/></svg>
        <svg class="icon"><path d="M2 6h2l4-4v12l-4-4H2z" fill="#fff"/><path d="M10 5c2 2 2 4 0 6M12 3c3 3 3 7 0 10" fill="none" stroke="#ddd"/></svg>
        <svg class="icon"><path d="M2 2v13" stroke="#fff"/><path d="M3 3h4l1 1h5v6H3z" fill="#fff"/><circle cx="11" cy="11" r="4.500" fill="#dc2a20"/><path d="M9 9l4 4M13 9l-4 4" stroke="#fff" stroke-width="1.500"/></svg>
        <svg class="icon"><path d="M5 4.500h9v7H5M8 14.500h6M11 12v2M1 3h4v4H1zM3 7v6h4M2 1v2M4 1v2" fill="none" stroke="#fff" stroke-width="1.300"/></svg>
        <div class="tray__clock"><time>13:42</time><time>11.04.2017</time></div>
        <button class="tray__desk" aria-label="Свернуть все окна"></button>
      </div>
    </div>
  </body>
</html>
```
FILE: styles.css
```css
*{box-sizing:border-box;margin:0;padding:0;}
body{height:100vh;display:flex;flex-direction:column;overflow:hidden;background:#e1e5e9;color:#111;font-family:Roboto,"Noto Sans",sans-serif;font-size:11px;line-height:14px;}
button{border:none;background:none;font:inherit;color:inherit;display:flex;align-items:center;justify-content:center;flex-shrink:0;}
h1,h2{font-size:11px;font-weight:normal;}
.sprite{position:absolute;width:0;height:0;}
.icon{width:16px;height:16px;flex-shrink:0;}

/* title */
.titlebar{height:21px;flex-shrink:0;display:flex;align-items:flex-start;border-bottom:1px solid #4b5f74;background:radial-gradient(ellipse 24px 14px at 454px 18px,#9cbcd8,transparent),radial-gradient(ellipse 18px 12px at 735px 18px,#9cc4e0,transparent),radial-gradient(ellipse 22px 14px at 1018px 18px,#a4cbe8,transparent),linear-gradient(90deg,#b4c8dc 0,#a8c0d8 16%,#7694b2 20%,#6c8cae 25%,#a9c6e4 26%,#a9c6e4 29%,#4c6c90 32%,#3f6088 55%,#5c7ea4 68%,#34506f 84%,#6c7f98 90%,#7890a8 100%);}
.titlebar__logo{width:16px;height:16px;margin-top:2px;}
.titlebar__text{flex:1;margin:3px 0 0 4px;line-height:14px;color:#111;}
.titlebar__btns{display:flex;margin-right:3px;border:1px solid #2b3a4c;border-top:none;border-radius:0 0 5px 5px;overflow:hidden;}
.winbtn{width:26px;height:15px;background:linear-gradient(#b9c4d0,#7f8ea0 45%,#5c6c82 50%,#8496aa);border-right:1px solid #2b3a4c;}
.winbtn--close{width:43px;border:none;background:linear-gradient(#dc9c90,#c4523c 45%,#a82c18 50%,#d0583c);}

/* menu */
.menu{height:22px;flex-shrink:0;display:flex;align-items:center;border-top:1px solid #fff;color:#333;}
.menu__item{padding:0 5px;height:20px;white-space:pre;}
.grip{width:3px;height:14px;margin:0 4px;flex-shrink:0;background:radial-gradient(circle at 1px 1px,#9aa0a8 1px,transparent 1px) 0 0/3px 4px;}
.grip--row{width:14px;height:3px;margin:3px 0 1px;background-size:4px 3px;}

/* toolbars */
.toolbars{height:24px;flex-shrink:0;display:flex;margin-bottom:1px;}
.toolbar{display:flex;align-items:center;background:linear-gradient(#fff,#f4f5f7 60%,#dfe2e8);border-bottom:1px solid #aab0b8;border-radius:3px;}
.tool{width:20px;height:20px;border-radius:2px;}
.tool--on{background:linear-gradient(#fbd878,#fbe08c);border:1px solid #c2a14a;}
.tool--fx{font-size:12px;color:#16228c;}
.drop{width:11px;height:20px;}
.drop::before,.tabs__more::before,.combo__btn::before{content:"";border:3px solid transparent;border-top:4px solid #111;border-bottom:none;}
.sep{width:9px;height:16px;flex-shrink:0;background:linear-gradient(#a8acb2,#a8acb2) center/1px 100% no-repeat;}
.cap{width:8px;height:24px;margin-left:3px;align-items:flex-end;padding-bottom:3px;background:linear-gradient(#c0c4ca,#8b9097);border-radius:0 3px 3px 0;}
.cap::before{content:"";width:6px;height:6px;background:#111;clip-path:polygon(0 0,100% 0,100% 1px,0 1px,0 3px,100% 3px,50% 100%,0 3px);}
.toolbar--view .drop{width:13px;}
.toolbar--view .sep,.toolbar--model .sep,.toolbar--state .sep{width:8px;}
.toolbar--state .sep--blank{width:6px;background:none;}
.toolbar--model .drop{width:12px;}
.toolbar--model .cap{margin-left:5px;}
.combo{display:grid;height:19px;margin:0 1px;border:1px solid #9a9fa6;background:#fff;align-items:stretch;}
.combo>*{grid-area:1/1;}
.combo select{appearance:none;width:100%;min-width:0;border:none;background:none;font:inherit;color:#111;padding:0 14px 0 5px;overflow:hidden;}
.combo__btn{justify-self:end;width:14px;display:flex;align-items:center;justify-content:center;background:linear-gradient(#f4f4f4,#d4d6da);border:1px solid #8d9299;pointer-events:none;}
.combo--zoom{width:62px;}
.combo--step{width:57px;}
.combo--wide{width:122px;}
.combo--wide select{padding-left:3px;}
.combo--load{width:107px;}

/* work area */
.work{flex:1;min-height:0;display:flex;border-top:1px solid #8f969e;}
.sidebar{width:25px;flex-shrink:0;}
.sidebar__tools{width:24px;padding-left:4px;display:flex;flex-direction:column;align-items:center;background:linear-gradient(90deg,#fff,#f4f6fa 50%,#d9dfea);border-right:1px solid #aab0b8;}
.side{width:16px;height:16px;}
.side .icon{width:14px;height:14px;}
.side--on{background:#f8e08c;border:1px solid #58a0d8;}
.side--tall{height:20px;width:18px;}
.side--tall .icon{width:16px;height:16px;}
.hsep{width:13px;height:9px;flex-shrink:0;background:linear-gradient(#9a9fa8,#9a9fa8) center/100% 1px no-repeat;}
.sidebar__cap{width:24px;height:11px;justify-content:flex-end;padding-right:3px;background:linear-gradient(90deg,#888e96,#c6cad0);border-radius:0 0 3px 3px;}
.doc{flex:1;min-width:0;display:flex;flex-direction:column;border:2px solid #b2bf96;border-width:0 1px 2px 1px;background:#e8f0cc;}
.tabs{height:20px;flex-shrink:0;display:flex;align-items:flex-end;background:linear-gradient(#e6e9ed,#fbfcfd);border-bottom:1px solid #aab78c;}
.tab{--cut:0px;position:relative;isolation:isolate;height:18px;justify-content:flex-start;padding:0 8px 0 6px;background:#8c8c68;clip-path:polygon(var(--cut) 0,100% 0,100% 100%,0 100%);}
.tab::before{content:"";position:absolute;inset:1px 1px 0;z-index:-1;background:linear-gradient(#fff3a8,#f9d668);clip-path:polygon(var(--cut) 0,100% 0,100% 100%,0 100%);}
.tab span{flex:1;text-align:center;white-space:nowrap;}
.tab--slant{--cut:20px;width:118px;padding-left:23px;}
.tab--part{width:116px;padding-right:14px;}
.tab--part span{padding-left:6px;}
.tab--active{width:165px;height:19px;margin-left:-17px;padding:0 7px 0 20px;font-weight:bold;background:#7c8c60;}
.tab--active::before{background:linear-gradient(#dcebb8,#c2d69a);}
.tab__close{width:9px;height:9px;}
.tab--pink{width:222px;background:#a87878;}
.tab--pink::before{background:linear-gradient(#fcc0c0,#ee9c9c);}
.tabs__more{margin-left:auto;width:14px;height:20px;}
.tabs__more::before{border-width:5px 5px 0;}
.doc__body{flex:1;min-height:0;display:flex;padding:2px 3px 2px 2px;}

/* model tree */
.panel{width:191px;flex-shrink:0;display:flex;flex-direction:column;background:#dfe3e8;padding-right:4px;}
.panel__head{height:17px;display:flex;align-items:center;gap:8px;padding:0 6px 0 2px;background:#bdcbdb;color:#44505c;}
.panel__head h2{flex:1;}
.panel__tools{height:24px;display:flex;align-items:center;padding-left:1px;background:linear-gradient(#fdfdfe,#e3e6ea);border-radius:3px;}
.panel__tools .drop{width:12px;}
.panel__tools .sep{width:8px;}
.panel__tools .tool{width:21px;}
.tree{flex:1;min-height:0;margin:2px 1px 2px 2px;display:flex;flex-direction:column;border:1px solid #9a9fa6;box-shadow:inset 0 0 0 1px #e0e2e6;background:#fff;overflow:hidden;}
.tree__list{flex:1;list-style:none;padding-top:2px;background:repeating-linear-gradient(#999 0 1px,transparent 1px 2px) 14px 21px/1px 102px no-repeat,repeating-linear-gradient(#999 0 1px,transparent 1px 2px) 36px 59px/1px 46px no-repeat;}
.node{height:19px;display:flex;align-items:center;padding-left:10px;white-space:nowrap;}
.node--root{padding-left:6px;}
.node span{padding:0 4px;line-height:18px;}
.node--root span{padding-right:0;}
.node--sub{padding-left:32px;}
.node__sel{background:#f0f0f0;}
.exp{width:9px;height:9px;border:1px solid #a0a0a0;background:#f6f6f6;font-style:normal;font-size:10px;line-height:7px;text-align:center;color:#33408c;}
.exp+.icon{margin-left:10px;}
.scroll{height:17px;display:flex;margin:0 2px 1px;background:#eee;}
.scroll__arrow{width:17px;}
.scroll__arrow::before{content:"";border:3px solid transparent;border-left:4px solid #333;border-right:none;}
.scroll__arrow--left::before{border-left:none;border-right:4px solid #333;}
.scroll__track{flex:1;}
.scroll__thumb{width:60%;height:15px;margin-top:1px;border:1px solid #989898;border-radius:1px;background:linear-gradient(#555,#555) 38px 4px/1px 6px no-repeat,linear-gradient(#555,#555) 41px 4px/1px 6px no-repeat,linear-gradient(#555,#555) 44px 4px/1px 6px no-repeat,linear-gradient(#f6f6f6,#e2e2e2 50%,#cfcfcf);}
.panel__tabs{height:18px;display:flex;padding-left:2px;border-top:1px solid #a4a9b0;color:#333;}
.ptab{height:16px;padding:0 3px;margin-right:2px;}
.ptab--on{background:#fff;border:1px solid #b0b4ba;border-top:none;}

/* 3d view */
.view{flex:1;min-width:0;border-left:1px solid #777;background:linear-gradient(#7bafe5,#b8d7f3 50%,#fbfdff);}
.view__scene{display:block;width:100%;height:100%;}
.axis{font-family:"Liberation Sans",sans-serif;font-size:30px;}
.axis--z{fill:#5478d4;}
.axis--y{fill:#68c47c;}

/* message and status */
.message{height:63px;flex-shrink:0;display:flex;padding:6px 5px 0 25px;}
.message__grip{width:5px;height:55px;background:radial-gradient(circle at 2px 2px,#999ea6 1px,transparent 1px) 0 0/5px 4px;}
.message__box{flex:1;height:33px;border:1px solid #9a9fa6;border-bottom-color:#777;box-shadow:inset 0 0 0 1px #e2e4e8;background:linear-gradient(#fff,#f7f8fa);}
.status{height:17px;flex-shrink:0;display:flex;border-top:1px solid #aab0b8;box-shadow:inset 0 1px #fff;background:linear-gradient(#dfe3e7,#c3c8d0);}
.status__main{flex:1;border-right:1px solid #8f949c;}
.status__cell{width:81px;border-left:1px solid #fff;}

/* taskbar */
.taskbar{height:38px;flex-shrink:0;display:flex;align-items:center;background:radial-gradient(ellipse 50px 30px at 140px 60%,#1e3028,transparent),radial-gradient(ellipse 90px 30px at 380px 90%,#223326,transparent),radial-gradient(ellipse 160px 24px at 620px 100%,#1f3229,transparent),linear-gradient(#5a6268,#11181c 4px,#0b1216);color:#fff;}
.start{width:36px;height:38px;margin-left:7px;}
.taskbar__grip{width:9px;height:30px;margin:0 8px 0 10px;background:radial-gradient(circle at 1px 1px,#3a4246 1px,transparent 1px) 0 0/3px 3px;}
.task{width:55px;height:36px;margin-right:3px;border-radius:3px;border:1px solid transparent;}
.task--run{border-color:#8c9294;background:linear-gradient(135deg,#8a9092,#454b4e 50%,#2c3234);}
.task--active{width:48px;margin-right:0;border-color:#dde0e2;background:linear-gradient(135deg,#c8ccd0,#8a9096 60%,#a4a8ac);}
.taskbar__stack{width:7px;height:36px;border:solid #8c9294;border-width:0 1px 0 1px;}
.tray{margin-left:auto;display:flex;align-items:center;}
.tray .icon{margin:0 3px;}
.tray__lang{font-size:12px;margin-right:12px;}
.tray__up{width:12px;margin-right:6px;}
.tray__up::before{content:"";border:4px solid transparent;border-bottom-color:#fff;border-top:none;}
.tray__clock{width:64px;margin:0 13px 0 15px;display:flex;flex-direction:column;align-items:center;line-height:16px;}
.tray__desk{width:13px;height:36px;border:1px solid #666c70;background:linear-gradient(135deg,#555,#15191c);}
```
